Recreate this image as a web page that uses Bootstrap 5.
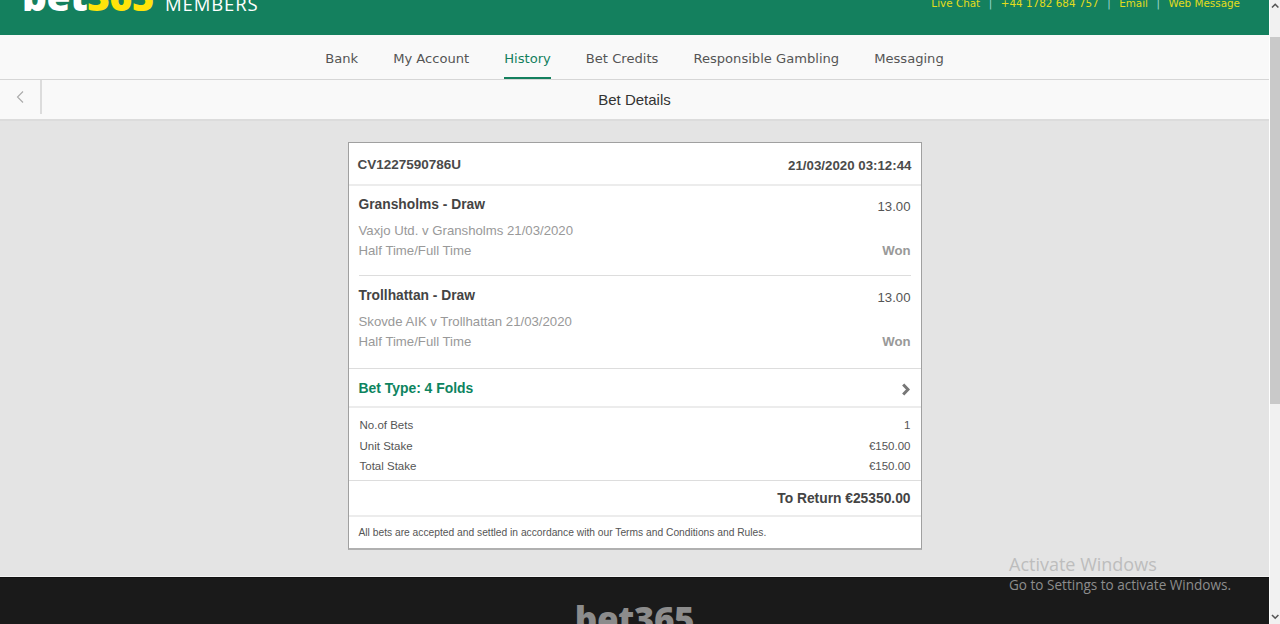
<!DOCTYPE html>
<html lang="en">
<head>
    <meta charset="UTF-8">
    <title>Bet Details</title>
    <link href="https://cdn.jsdelivr.net/npm/bootstrap@5.3.0/dist/css/bootstrap.min.css" rel="stylesheet">
    <style>
        html, body { height: 624px; overflow: hidden; }
        body { background: #e4e4e4; font-family: "Liberation Sans", Arial, sans-serif; color: #444; }
        .page-main { width: 1269px; height: 624px; overflow: hidden; }
        .side-scroll { width: 11px; height: 624px; background: #f1f1f1; border-left: 1px solid #fff; }
        .side-scroll svg { display: block; flex-shrink: 0; }
        .side-thumb { height: 367px; background: #c9c9c9; margin-top: 23px; margin-bottom: auto; }
        .top-band { height: 35px; background: #14805e; overflow: hidden; padding: 0 29px 19px 22px; }
        .logo-word { font-family: "Open Sans", sans-serif; font-weight: 800; font-size: 38.8px; line-height: 40px; color: #fff; letter-spacing: -0.5px; }
        .logo-word span { color: #ffe40a; }
        .logo-sub { font-family: "Open Sans", sans-serif; font-size: 18.5px; line-height: 17px; color: #fff; margin-left: 11px; letter-spacing: .9px; }
        .top-links { font-family: "DejaVu Sans", sans-serif; font-size: 10.4px; line-height: 14px; color: #e3dc1c; margin-bottom: 6px; }
        .top-links i { font-style: normal; color: #9fd8d0; margin: 0 8.5px; }
        .menu-bar { height: 45px; background: #f9f9f9; border-bottom: 1px solid #d6d6d6; gap: 35px; }
        .menu-bar a { font-family: "DejaVu Sans", sans-serif; font-size: 13.1px; line-height: 48px; height: 44px; color: #555; text-decoration: none; }
        .menu-bar a.on { color: #14805e; border-bottom: 2px solid #14805e; }
        .title-bar { height: 41px; background: #f9f9f9; border-bottom: 2px solid #dcdcdc; }
        .back-cell { width: 42px; height: 34px; border-right: 2px solid #dcdcdc; margin-bottom: 5px; }
        .title-text { font-size: 15px; line-height: 40px; color: #333; margin-left: -42px; }
        .content-area { height: 456px; padding-top: 21px; }
        .slip { width: 574px; height: 408px; background: #fff; border: 1px solid #a0a0a0; border-bottom: 2px solid #b0b0b0; }
        .slip-head { height: 43px; padding: 4px 9px 0 9px; border-bottom: 2px solid #ececec; font-size: 13.5px; font-weight: 700; color: #4a4a4a; }
        .slip-stamp { font-size: 13.3px; }
        .leg { height: 89px; margin: 0 10px; padding-top: 9px; }
        .leg + .leg { height: 93px; padding-top: 10px; border-top: 1px solid #ddd; }
        .leg-top { margin-bottom: 2px; }
        .leg-name { font-size: 13.8px; font-weight: 700; color: #444; line-height: 20px; }
        .leg-odds { font-size: 13.2px; color: #555; line-height: 24px; }
        .leg-info { font-size: 13.2px; color: #999; line-height: 20.2px; }
        .leg-won { font-weight: 700; color: #999; }
        .type-row { height: 40px; padding: 2px 11px 0 10px; border-top: 1px solid #ddd; border-bottom: 2px solid #ececec; font-size: 13.9px; font-weight: 700; color: #0d8460; }
        .type-row svg { margin-top: 2px; }
        .stake-box { height: 73px; padding: 7px 10px 0 11px; border-bottom: 1px solid #ddd; font-size: 11.5px; line-height: 20.7px; color: #555; }
        .return-row { height: 36px; padding: 2px 10px 0; border-bottom: 2px solid #ececec; font-size: 13.8px; font-weight: 700; color: #444; }
        .small-print { font-size: 10.25px; line-height: 32px; padding-left: 10px; color: #555; }
        .foot-band { height: 48px; background: #1a1a1a; border-top: 1px solid #111; box-shadow: 0 -1px 0 #f2f2f2; padding-top: 21px; }
        .foot-logo { font-family: "Open Sans", sans-serif; font-weight: 800; font-size: 35px; line-height: 40px; color: #8c8c8c; letter-spacing: -0.4px; }
        .win-note { position: absolute; left: 1009px; top: 553px; font-family: "Open Sans", sans-serif; color: #bdbdbd; pointer-events: none; }
        .win-note b { display: block; font-weight: 400; font-size: 18px; line-height: 22px; }
        .win-note span { display: block; font-size: 13.55px; line-height: 20px; color: #8d8d8d; }
    </style>
</head>
<body>
<div class="d-flex">
    <div class="page-main">
        <div class="top-band d-flex justify-content-between align-items-end">
            <div class="d-flex align-items-baseline">
                <div class="logo-word">bet<span>365</span></div>
                <div class="logo-sub">MEMBERS</div>
            </div>
            <div class="top-links">Live Chat<i>|</i>+44 1782 684 757<i>|</i>Email<i>|</i>Web Message</div>
        </div>

        <nav class="menu-bar d-flex justify-content-center">
            <a href="#">Bank</a>
            <a href="#">My Account</a>
            <a href="#" class="on">History</a>
            <a href="#">Bet Credits</a>
            <a href="#">Responsible Gambling</a>
            <a href="#">Messaging</a>
        </nav>

        <div class="title-bar d-flex">
            <div class="back-cell d-flex align-items-center justify-content-center">
                <svg width="8" height="12" viewBox="0 0 8 12"><path d="M7 .5 1.5 6 7 11.5" fill="none" stroke="#aaa" stroke-width="1.1"/></svg>
            </div>
            <div class="title-text flex-grow-1 text-center">Bet Details</div>
        </div>

        <div class="content-area d-flex justify-content-center">
            <div class="slip">
                <div class="slip-head d-flex justify-content-between align-items-center">
                    <span>CV1227590786U</span>
                    <span class="slip-stamp">21/03/2020 03:12:44</span>
                </div>
                <div class="leg">
                    <div class="leg-top d-flex justify-content-between">
                        <span class="leg-name">Gransholms - Draw</span>
                        <span class="leg-odds">13.00</span>
                    </div>
                    <div class="leg-info">Vaxjo Utd. v Gransholms 21/03/2020</div>
                    <div class="leg-info d-flex justify-content-between"><span>Half Time/Full Time</span><span class="leg-won">Won</span></div>
                </div>
                <div class="leg">
                    <div class="leg-top d-flex justify-content-between">
                        <span class="leg-name">Trollhattan - Draw</span>
                        <span class="leg-odds">13.00</span>
                    </div>
                    <div class="leg-info">Skovde AIK v Trollhattan 21/03/2020</div>
                    <div class="leg-info d-flex justify-content-between"><span>Half Time/Full Time</span><span class="leg-won">Won</span></div>
                </div>
                <div class="type-row d-flex justify-content-between align-items-center">
                    <span>Bet Type: 4 Folds</span>
                    <svg width="9" height="13" viewBox="0 0 9 13"><path d="M2.2 1.5 7 6.5l-4.8 5" fill="none" stroke="#777" stroke-width="3"/></svg>
                </div>
                <div class="stake-box">
                    <div class="d-flex justify-content-between"><span>No.of Bets</span><span>1</span></div>
                    <div class="d-flex justify-content-between"><span>Unit Stake</span><span>€150.00</span></div>
                    <div class="d-flex justify-content-between"><span>Total Stake</span><span>€150.00</span></div>
                </div>
                <div class="return-row d-flex justify-content-end align-items-center">To Return €25350.00</div>
                <div class="small-print">All bets are accepted and settled in accordance with our Terms and Conditions and Rules.</div>
            </div>
        </div>

        <div class="foot-band text-center"><span class="foot-logo">bet365</span></div>
    </div>
    <div class="side-scroll d-flex flex-column">
        <svg width="10" height="14" viewBox="0 0 10 14"><path d="M2 7.5l3.2-3.2 3.2 3.2" fill="none" stroke="#555" stroke-width="1.6"/></svg>
        <div class="side-thumb"></div>
        <svg width="10" height="14" viewBox="0 0 10 14"><path d="M2 5l3.2 3.2L8.4 5" fill="none" stroke="#555" stroke-width="1.6"/></svg>
    </div>
</div>
<div class="win-note"><b>Activate Windows</b><span>Go to Settings to activate Windows.</span></div>
<script src="https://cdn.jsdelivr.net/npm/bootstrap@5.3.0/dist/js/bootstrap.bundle.min.js"></script>
</body>
</html>
